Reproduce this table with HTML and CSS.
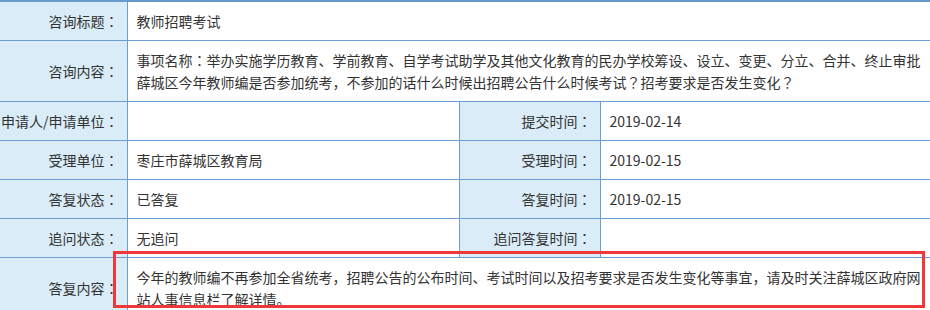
FILE: index.html
```html
<!DOCTYPE html>
<html lang="zh-CN">
<head>
<meta charset="utf-8">
<title>咨询详情</title>
<link rel="stylesheet" href="styles.css">
</head>
<body>
<div class="frame">
  <table class="detail">
    <colgroup>
      <col class="c1"><col class="c2"><col class="c3"><col class="c4">
    </colgroup>
    <tr class="first">
      <th>咨询标题<span class="pc" lang="ja">：</span></th>
      <td colspan="3">教师招聘考试</td>
    </tr>
    <tr>
      <th>咨询内容<span class="pc" lang="ja">：</span></th>
      <td colspan="3">事项名称<span class="pc" lang="ja">：</span>举办实施学历教育、学前教育、自学考试助学及其他文化教育的民办学校筹设、设立、变更、分立、合并、终止审批薛城区今年教师编是否参加统考，不参加的话什么时候出招聘公告什么时候考试<span class="pc" lang="ja">？</span>招考要求是否发生变化<span class="pc" lang="ja">？</span></td>
    </tr>
    <tr>
      <th>申请人/申请单位<span class="pc" lang="ja">：</span></th>
      <td></td>
      <th>提交时间<span class="pc" lang="ja">：</span></th>
      <td>2019-02-14</td>
    </tr>
    <tr>
      <th>受理单位<span class="pc" lang="ja">：</span></th>
      <td>枣庄市薛城区教育局</td>
      <th>受理时间<span class="pc" lang="ja">：</span></th>
      <td>2019-02-15</td>
    </tr>
    <tr>
      <th>答复状态<span class="pc" lang="ja">：</span></th>
      <td>已答复</td>
      <th>答复时间<span class="pc" lang="ja">：</span></th>
      <td>2019-02-15</td>
    </tr>
    <tr>
      <th>追问状态<span class="pc" lang="ja">：</span></th>
      <td>无追问</td>
      <th>追问答复时间<span class="pc" lang="ja">：</span></th>
      <td></td>
    </tr>
    <tr>
      <th>答复内容<span class="pc" lang="ja">：</span></th>
      <td colspan="3">今年的教师编不再参加全省统考，招聘公告的公布时间、考试时间以及招考要求是否发生变化等事宜，请及时关注薛城区政府网站人事信息栏了解详情。</td>
    </tr>
  </table>
  <div class="mark"></div>
</div>
</body>
</html>
```
FILE: styles.css
```css
html, body {
  margin: 0;
  padding: 0;
  background: #ffffff;
}
.frame {
  position: relative;
  width: 930px;
  height: 310px;
  overflow: hidden;
}
.detail {
  width: 940px;
  table-layout: fixed;
  border-collapse: collapse;
  font-family: "Noto Sans CJK SC", "Noto Sans", sans-serif;
  font-size: 14px;
  line-height: 22px;
  color: #333333;
  border-top: 2px solid #6699cc;
}
.pc {
  font-family: "Noto Sans CJK JP", "Noto Sans CJK SC", sans-serif;
}
.c1 { width: 127px; }
.c2 { width: 332px; }
.c3 { width: 141px; }
.c4 { width: auto; }
.detail th,
.detail td {
  border: 1px solid #6b9fd2;
  padding: 8px 8px 8px 9px;
  vertical-align: middle;
}
.detail th {
  background: #d9ecf7;
  font-weight: normal;
  text-align: right;
  white-space: nowrap;
  padding-left: 0;
  border-left: none;
}
.detail td {
  text-align: left;
  background: #ffffff;
}
.detail tr.first th,
.detail tr.first td {
  border-top: 2px solid #6699cc;
}
.mark {
  position: absolute;
  left: 113px;
  top: 251px;
  width: 806px;
  height: 51px;
  border: 3px solid #f0383b;
}
```
